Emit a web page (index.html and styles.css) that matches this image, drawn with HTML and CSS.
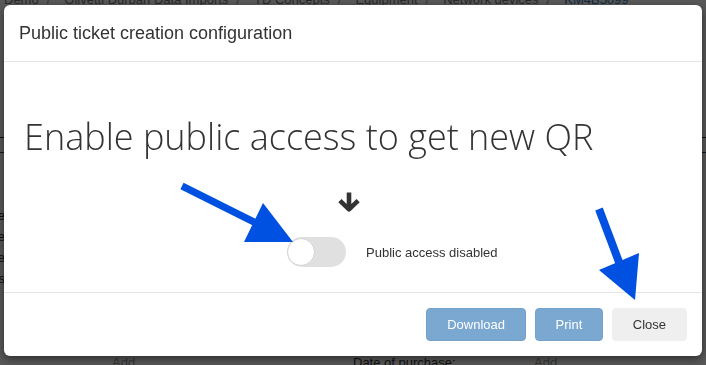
FILE: index.html
```html
<!DOCTYPE html>
<html>
<head>
<title>Public ticket creation configuration</title>
<meta charset="utf-8" />
<link rel="stylesheet" href="styles.css">
</head>

<body>

<div class="page">

	<ol class="breadcrumb">
		<li>Demo</li>
		<li>Olivetti Durban Data Imports</li>
		<li>TD Concepts</li>
		<li>Equipment</li>
		<li>Network devices</li>
		<li class="active">KM4B5099</li>
	</ol>

	<div class="tabs"></div>

	<div class="details">
		<div class="row"><span class="label">Name</span></div>
		<div class="row"><span class="label">Type</span></div>
		<div class="row"><span class="label">Site</span></div>
		<div class="row"><span class="label">Details</span></div>
	</div>

	<div class="fields">
		<span class="empty">Add</span>
		<span>Date of purchase:</span>
		<span class="empty">Add</span>
	</div>

</div>

<div class="backdrop"></div>

<div class="modal">

	<div class="modal-header">
		<h4 class="modal-title">Public ticket creation configuration</h4>
	</div>

	<div class="modal-body">

		<h1 class="qr-title">Enable public access to get new QR</h1>

		<div class="hint">
			<svg class="hint-icon" width="24" height="21" viewBox="0 0 24 21">
				<path d="M12 0.5 V16 M2.9 8.6 L12 17.4 L21.1 8.6" fill="none" stroke="#333" stroke-width="4.6" stroke-linejoin="round" />
			</svg>
		</div>

		<div class="switch-row">
			<span class="switch"></span>
			<span class="switch-label">Public access disabled</span>
		</div>

	</div>

	<div class="modal-footer">
		<button class="btn btn-primary" disabled>Download</button>
		<button class="btn btn-primary" disabled>Print</button>
		<button class="btn btn-default">Close</button>
	</div>

</div>

<svg class="marks" width="706" height="365" viewBox="0 0 706 365">
	<line x1="182" y1="186" x2="256" y2="223" stroke="#0050e1" stroke-width="7" />
	<polygon points="263,203 244,242 293,242" fill="#0050e1" />
	<line x1="599" y1="209" x2="619" y2="262" stroke="#0050e1" stroke-width="8" />
	<polygon points="599,270 639,253 635,300" fill="#0050e1" />
</svg>

</body>
</html>
```

FILE: styles.css
```css
body {
	margin: 0;
	background: #fff;
	font: 13px "Liberation Sans", Arial, sans-serif;
	color: #333;
	overflow: hidden;
	height: 365px;
}

/* page behind the dialog */

.page {
	width: 706px;
}

.breadcrumb {
	display: flex;
	margin: -9px 0 0 0;
	padding: 0 0 0 4px;
	list-style: none;
	line-height: 18px;
	color: #777;
}

.breadcrumb li + li:before {
	content: "/";
	color: #999;
	margin: 0 14px 0 8px;
}

.breadcrumb .active {
	color: #337ab7;
}

.tabs {
	margin-top: 128px;
	height: 14px;
	border-top: 1px solid #333;
	border-bottom: 1px solid #2a4a6a;
}

.details {
	margin-top: 52px;
}

.details .row {
	display: flex;
	height: 21px;
	line-height: 21px;
}

.details .label {
	width: 5px;
	display: flex;
	justify-content: flex-end;
	white-space: nowrap;
}

.fields {
	display: grid;
	grid-template-columns: 241px 181px auto;
	margin-top: 65px;
	padding-left: 112px;
	line-height: 18px;
}

.fields .empty {
	color: #999;
}

.backdrop {
	position: fixed;
	top: 0;
	left: 0;
	right: 0;
	bottom: 0;
	background: rgba(0, 0, 0, 0.65);
}

/* dialog */

.modal {
	position: absolute;
	top: 5px;
	left: 4px;
	width: 698px;
	background: #fff;
	border-radius: 6px;
	box-shadow: 0 3px 9px rgba(0, 0, 0, 0.5);
}

.modal-header {
	padding: 17px 15px;
	border-bottom: 1px solid #e5e5e5;
}

.modal-title {
	margin: 0;
	font-size: 18px;
	font-weight: normal;
	line-height: 22px;
}

.modal-body {
	padding: 50px 17px 25px 20px;
}

.qr-title {
	margin: 0;
	font: 300 36px "Open Sans", sans-serif;
	line-height: 49px;
	color: #333;
}

.hint {
	margin: 31px 0 0 313px;
	height: 21px;
}

.hint-icon {
	display: block;
}

.switch-row {
	display: flex;
	align-items: center;
	margin: 24px 0 0 263px;
}

.switch {
	position: relative;
	width: 59px;
	height: 30px;
	border-radius: 15px;
	background: #e0e0e0;
}

.switch:before {
	content: "";
	position: absolute;
	top: 1px;
	left: 0;
	width: 26px;
	height: 26px;
	border: 1px solid #d4d4d4;
	border-radius: 50%;
	background: #fff;
}

.switch-label {
	margin-left: 20px;
	font-size: 13px;
}

.modal-footer {
	display: flex;
	justify-content: flex-end;
	gap: 8.5px;
	padding: 15px;
	border-top: 1px solid #e5e5e5;
}

.btn {
	padding: 6px 20px;
	border: 1px solid transparent;
	border-radius: 4px;
	font: 13px "Liberation Sans", Arial, sans-serif;
	line-height: 19px;
}

.btn-primary {
	background: #7aa8d0;
	border-color: #74a2cc;
	color: #fff;
}

.btn-default {
	background: #efefef;
	border-color: #efefef;
	color: #333;
}

.marks {
	position: absolute;
	top: 0;
	left: 0;
}
```
